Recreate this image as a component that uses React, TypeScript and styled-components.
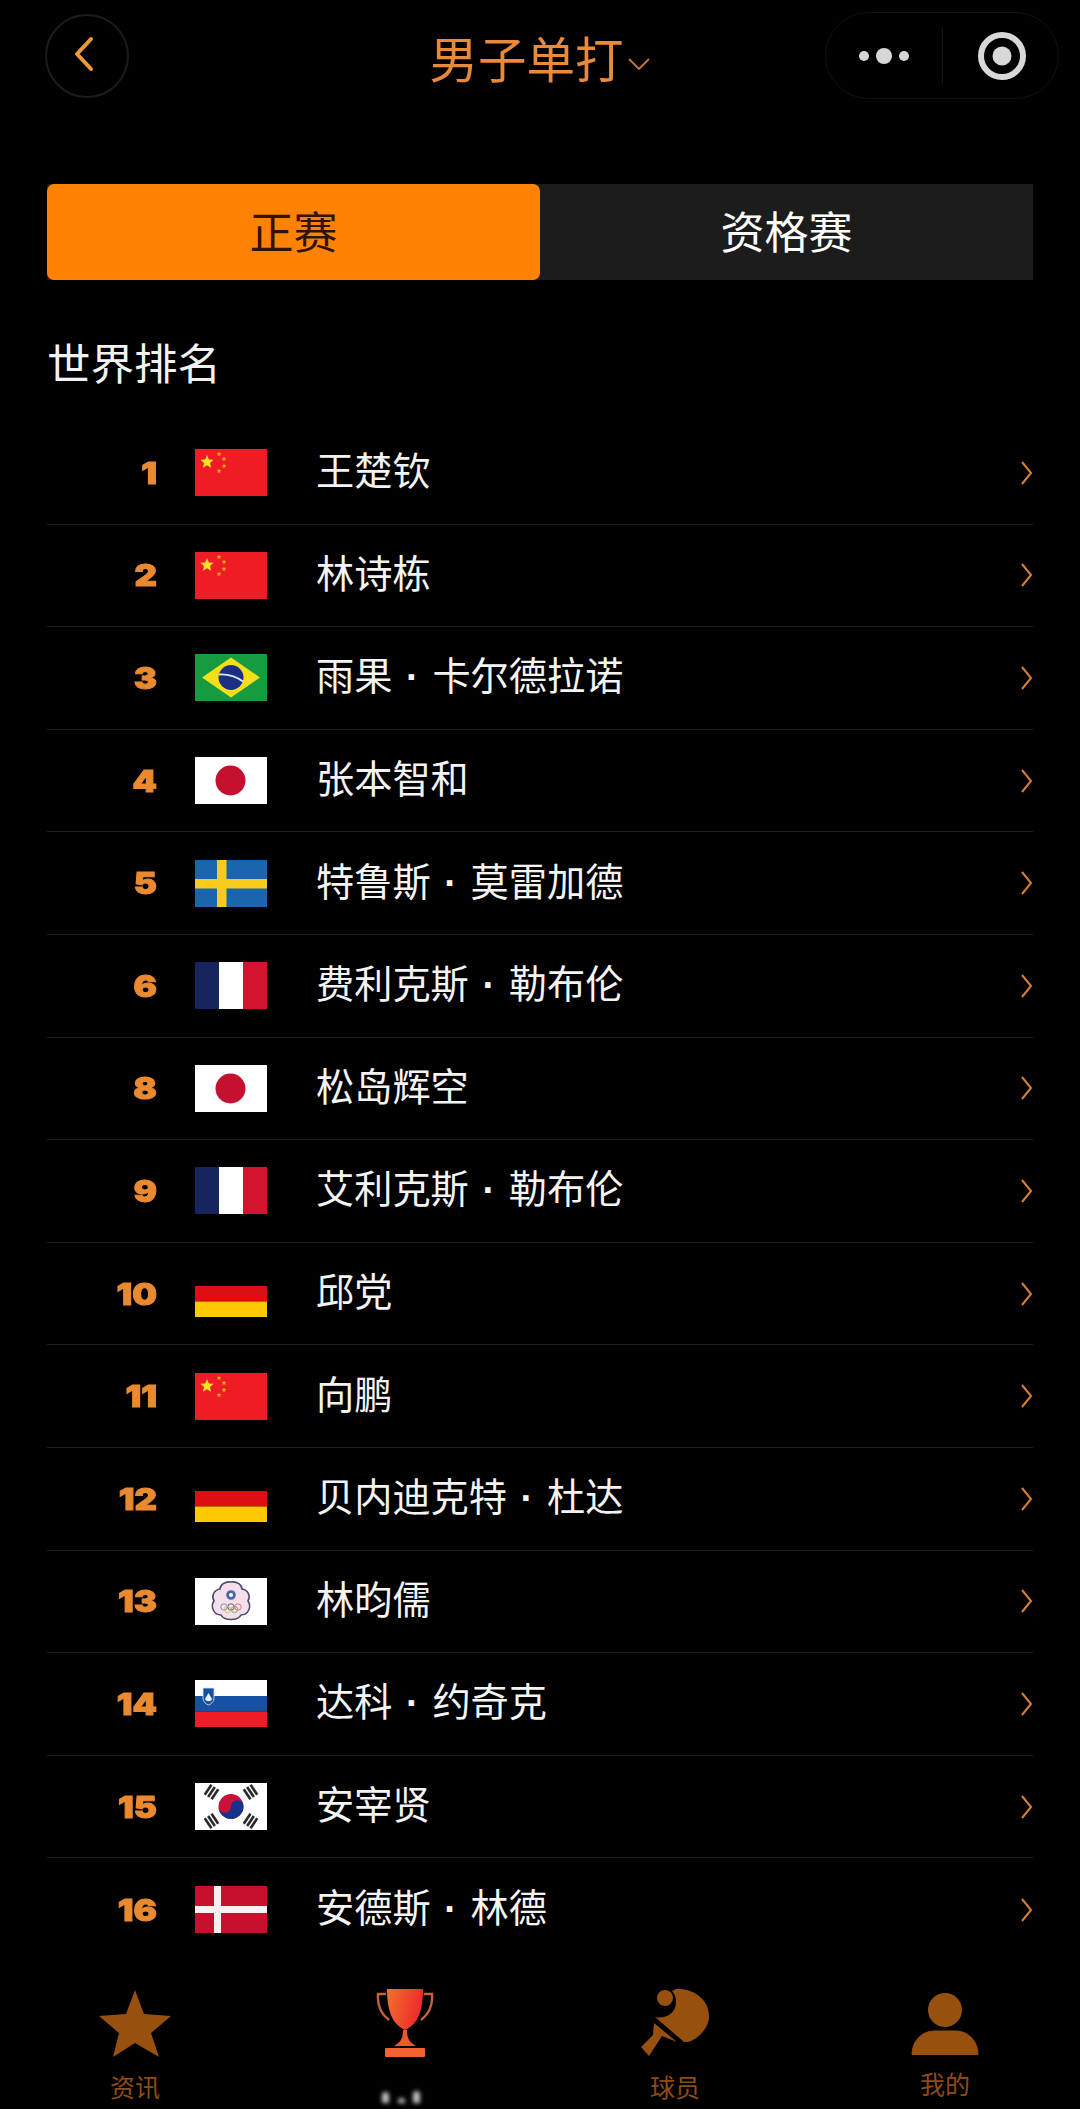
import React from 'react';
import styled, { createGlobalStyle } from 'styled-components';

const GlobalStyle = createGlobalStyle`
  html, body { margin: 0; padding: 0; background: #000; }
  * { box-sizing: border-box; }
  #root { font-family: "Noto Sans CJK SC", "Noto Sans", sans-serif; }
`;

const Page = styled.div`
  width: 1080px;
  height: 2109px;
  background: #000;
  display: flex;
  flex-direction: column;
  overflow: hidden;
`;

const Header = styled.header`
  height: 99px;
  margin-top: 6px;
  padding: 0 21px;
  display: grid;
  grid-template-columns: 1fr auto 1fr;
  align-items: center;
`;

const BackButton = styled.button`
  justify-self: start;
  width: 84px;
  height: 84px;
  margin-left: 24px;
  padding: 0 6px 4px 0;
  border: 2px solid #1c1c1c;
  border-radius: 50%;
  background: transparent;
  display: flex;
  align-items: center;
  justify-content: center;
`;

const TitleWrap = styled.div`
  display: flex;
  align-items: center;
  gap: 3px;
  padding-top: 3px;
  color: #e88a38;
`;

const Title = styled.h1`
  margin: 0;
  font-size: 48.5px;
  line-height: 66px;
  font-weight: 400;
`;

const TitleCaret = styled.svg`
  width: 24px;
  height: 14px;
  margin-top: 14px;
`;

const Capsule = styled.div`
  justify-self: end;
  width: 234px;
  height: 87px;
  border: 1.5px solid #121212;
  border-radius: 44px;
  display: flex;
  align-items: center;
`;

const CapsuleSide = styled.div<{ $nudge?: number }>`
  flex: none;
  width: 50%;
  height: 55px;
  padding-left: ${p => p.$nudge ?? 0}px;
  display: flex;
  align-items: center;
  justify-content: center;
  & + & { border-left: 1.5px solid #181818; }
`;

const Tabs = styled.nav`
  margin: 79px 47px 0;
  height: 96px;
  display: grid;
  grid-template-columns: 1fr 1fr;
  background: #1c1c1c;
`;

const Tab = styled.div<{ $active?: boolean }>`
  display: flex;
  align-items: center;
  justify-content: center;
  font-size: 44px;
  padding-bottom: 4px;
  border-radius: 7px;
  background: ${p => (p.$active ? '#ff8205' : 'transparent')};
  color: ${p => (p.$active ? '#331300' : '#fff')};
`;

const SectionTitle = styled.h2`
  margin: 50px 47px 0;
  height: 92px;
  font-size: 43.5px;
  line-height: 64px;
  font-weight: 400;
  color: #f2f2f2;
`;

const List = styled.ul`
  list-style: none;
  margin: 0 47px;
  padding: 0;
`;

const Row = styled.li`
  height: 102.6px;
  display: flex;
  align-items: center;
  border-bottom: 1px solid #1d1d1d;
  &:last-child { border-bottom: none; }
`;

const Rank = styled.span`
  width: 110px;
  text-align: right;
  font-family: Inter, "DejaVu Sans", sans-serif;
  font-weight: 900;
  font-size: 30px;
  color: #ea8a30;
  -webkit-text-stroke: 1px #ea8a30;
  transform: scaleX(1.16);
  transform-origin: right center;
`;

const FlagBox = styled.svg`
  width: 72px;
  height: 47px;
  margin-left: 38px;
  flex: none;
`;

const Name = styled.span`
  flex: 1;
  margin-left: 49px;
  margin-top: -8px;
  font-size: 38.2px;
  color: #f4f4f4;
  white-space: pre;
`;

const NameDot = styled.span`
  display: inline-block;
  width: 40px;
  text-align: center;
  font-family: "Liberation Sans", sans-serif;
  font-weight: 700;
`;

const Arrow = styled.svg`
  width: 13px;
  height: 26px;
  flex: none;
`;

const TabBar = styled.footer`
  margin-top: auto;
  height: 122px;
  display: grid;
  grid-template-columns: repeat(4, 1fr);
`;

const TabItem = styled.div`
  display: flex;
  flex-direction: column;
  align-items: center;
`;

const TabIconSlot = styled.div`
  height: 72px;
  display: flex;
  align-items: center;
  justify-content: center;
`;

const TabLabel = styled.span<{ $shift?: number }>`
  margin-top: ${p => 11 + (p.$shift ?? 0)}px;
  font-size: 25px;
  line-height: 32px;
  color: #8c4c14;
`;

const Smudges = styled.div`
  margin: 32px 8px 0 0;
  width: 38px;
  height: 12px;
  display: flex;
  justify-content: space-between;
  align-items: flex-end;
  filter: blur(2px);
`;

const Smudge = styled.i<{ $h: number }>`
  width: 7px;
  height: ${p => p.$h}px;
  background: #c4c4c4;
  border-radius: 4px 4px 0 0;
`;

type FlagCode = 'cn' | 'br' | 'jp' | 'se' | 'fr' | 'de' | 'tpe' | 'si' | 'kr' | 'dk';

const CnStar = ({ x, y, r, fill = '#fbe02a' }: { x: number; y: number; r: number; fill?: string }) => {
  const pts = Array.from({ length: 10 }, (_, i) => {
    const a = -Math.PI / 2 + (i * Math.PI) / 5;
    const d = i % 2 ? r * 0.45 : r;
    return `${x + d * Math.cos(a)},${y + d * Math.sin(a)}`;
  }).join(' ');
  return <polygon points={pts} fill={fill} />;
};

const Trigram = ({ x, y, rot }: { x: number; y: number; rot: number }) => (
  <g transform={`translate(${x} ${y}) rotate(${rot})`} fill="#2a2a2a">
    <rect x="-6" y="-5.4" width="12" height="2.6" />
    <rect x="-6" y="-1.3" width="12" height="2.6" />
    <rect x="-6" y="2.8" width="12" height="2.6" />
  </g>
);

const Flag = ({ code }: { code: FlagCode }) => (
  <FlagBox viewBox="0 0 72 47">
    {code === 'cn' && (
      <>
        <rect width="72" height="47" fill="#ee1c25" />
        <CnStar x={12} y={13} r={7} />
        <CnStar x={24} y={5} r={2.6} fill="#f5a51e" />
        <CnStar x={29} y={10} r={2.6} fill="#f5a51e" />
        <CnStar x={29} y={17} r={2.6} fill="#f5a51e" />
        <CnStar x={24} y={22} r={2.6} fill="#f5a51e" />
      </>
    )}
    {code === 'br' && (
      <>
        <rect width="72" height="47" fill="#169b3e" />
        <polygon points="36,3.5 65,23.5 36,43.5 7,23.5" fill="#f5df18" />
        <circle cx="36" cy="23.5" r="12.5" fill="#1b2f86" />
        <path d="M24 20.5 C32 20 41 22.5 48 27.5" stroke="#dfe6f0" strokeWidth="1.8" fill="none" />
      </>
    )}
    {code === 'jp' && (
      <>
        <rect width="72" height="47" fill="#fff" />
        <circle cx="35.5" cy="23.5" r="15" fill="#c5102f" />
      </>
    )}
    {code === 'se' && (
      <>
        <rect width="72" height="47" fill="#1a66ac" />
        <rect x="22" width="9.5" height="47" fill="#f8cb1c" />
        <rect y="19" width="72" height="9.5" fill="#f8cb1c" />
      </>
    )}
    {code === 'fr' && (
      <>
        <rect width="24" height="47" fill="#14245c" />
        <rect x="24" width="24" height="47" fill="#fff" />
        <rect x="48" width="24" height="47" fill="#d3142e" />
      </>
    )}
    {code === 'de' && (
      <>
        <rect width="72" height="16" fill="#000" />
        <rect y="16" width="72" height="15.5" fill="#dd0f14" />
        <rect y="31.5" width="72" height="15.5" fill="#fdc905" />
      </>
    )}
    {code === 'tpe' && (
      <>
        <rect width="72" height="47" fill="#fff" />
        <path
          d="M36 4 C42 3 47 7 47 11 C53 12 56 18 53 23 C57 29 53 37 46 37 C43 43 29 43 26 37 C19 37 15 29 19 23 C16 18 19 12 25 11 C25 7 30 3 36 4 Z"
          fill="#f4dfea"
          stroke="#4c4a70"
          strokeWidth="1.6"
        />
        <circle cx="36" cy="17" r="4.8" fill="#4b68ac" />
        <circle cx="36" cy="17" r="2" fill="#fff" />
        <g fill="none" strokeWidth="0.9">
          <circle cx="29" cy="29" r="3.2" stroke="#6d8fc0" />
          <circle cx="36" cy="29" r="3.2" stroke="#555" />
          <circle cx="43" cy="29" r="3.2" stroke="#cf6a70" />
          <circle cx="32.5" cy="31.5" r="3.2" stroke="#d8bf60" />
          <circle cx="39.5" cy="31.5" r="3.2" stroke="#78a878" />
        </g>
      </>
    )}
    {code === 'si' && (
      <>
        <rect width="72" height="16" fill="#fff" />
        <rect y="16" width="72" height="15.5" fill="#1552a4" />
        <rect y="31.5" width="72" height="15.5" fill="#ee1c25" />
        <path d="M8 8 H19 V18 C19 22 16 24 13.5 25 C11 24 8 22 8 18 Z" fill="#1552a4" stroke="#dfe6ee" strokeWidth="0.8" />
        <path d="M10 19 L13.5 13 L17 19 C16 22 11 22 10 19 Z" fill="#eef2f6" />
      </>
    )}
    {code === 'kr' && (
      <>
        <rect width="72" height="47" fill="#fff" />
        <circle cx="36" cy="23.5" r="12.5" fill="#c9123a" />
        <path
          d="M23.5 23.5 A6.25 6.25 0 0 0 36 23.5 A6.25 6.25 0 0 1 48.5 23.5 A12.5 12.5 0 0 1 23.5 23.5 Z"
          fill="#17348c"
        />
        <Trigram x={16.5} y={9} rot={-56} />
        <Trigram x={55.5} y={9} rot={56} />
        <Trigram x={16.5} y={38} rot={56} />
        <Trigram x={55.5} y={38} rot={-56} />
      </>
    )}
    {code === 'dk' && (
      <>
        <rect width="72" height="47" fill="#c8102e" />
        <rect x="19" width="7" height="47" fill="#fbeef0" />
        <rect y="20" width="72" height="7" fill="#fbeef0" />
      </>
    )}
  </FlagBox>
);

const players: { rank: number; flag: FlagCode; name: string }[] = [
  { rank: 1, flag: 'cn', name: '王楚钦' },
  { rank: 2, flag: 'cn', name: '林诗栋' },
  { rank: 3, flag: 'br', name: '雨果·卡尔德拉诺' },
  { rank: 4, flag: 'jp', name: '张本智和' },
  { rank: 5, flag: 'se', name: '特鲁斯·莫雷加德' },
  { rank: 6, flag: 'fr', name: '费利克斯·勒布伦' },
  { rank: 8, flag: 'jp', name: '松岛辉空' },
  { rank: 9, flag: 'fr', name: '艾利克斯·勒布伦' },
  { rank: 10, flag: 'de', name: '邱党' },
  { rank: 11, flag: 'cn', name: '向鹏' },
  { rank: 12, flag: 'de', name: '贝内迪克特·杜达' },
  { rank: 13, flag: 'tpe', name: '林昀儒' },
  { rank: 14, flag: 'si', name: '达科·约奇克' },
  { rank: 15, flag: 'kr', name: '安宰贤' },
  { rank: 16, flag: 'dk', name: '安德斯·林德' },
];

const BROWN = '#98500f';

const PlayerName = ({ value }: { value: string }) => {
  const [given, family] = value.split('·');
  return (
    <Name>
      {given}
      {family && <NameDot>·</NameDot>}
      {family}
    </Name>
  );
};

export default function App() {
  return (
    <Page>
      <GlobalStyle />
      <Header>
        <BackButton aria-label="back">
          <svg width="22" height="36" viewBox="0 0 22 36">
            <path d="M18 3 L4 18 L18 33" fill="none" stroke="#ef9a3a" strokeWidth="4" strokeLinecap="round" strokeLinejoin="round" />
          </svg>
        </BackButton>
        <TitleWrap>
          <Title>男子单打</Title>
          <TitleCaret viewBox="0 0 24 14">
            <path d="M2 2 L12 12 L22 2" fill="none" stroke="#c8763a" strokeWidth="1.8" />
          </TitleCaret>
        </TitleWrap>
        <Capsule>
          <CapsuleSide>
            <svg width="52" height="20" viewBox="0 0 52 20">
              <circle cx="6" cy="10" r="5" fill="#d8d8d8" />
              <circle cx="26" cy="10" r="8" fill="#d8d8d8" />
              <circle cx="46" cy="10" r="5" fill="#d8d8d8" />
            </svg>
          </CapsuleSide>
          <CapsuleSide $nudge={3}>
            <svg width="50" height="50" viewBox="0 0 50 50">
              <circle cx="25" cy="25" r="21" fill="none" stroke="#d8d8d8" strokeWidth="6" />
              <circle cx="25" cy="25" r="9.5" fill="#d8d8d8" />
            </svg>
          </CapsuleSide>
        </Capsule>
      </Header>

      <Tabs>
        <Tab $active>正赛</Tab>
        <Tab>资格赛</Tab>
      </Tabs>

      <SectionTitle>世界排名</SectionTitle>

      <List>
        {players.map(p => (
          <Row key={p.rank}>
            <Rank>{p.rank}</Rank>
            <Flag code={p.flag} />
            <PlayerName value={p.name} />
            <Arrow viewBox="0 0 13 26">
              <path d="M2 2 L11 13 L2 24" fill="none" stroke="#d87f35" strokeWidth="2" />
            </Arrow>
          </Row>
        ))}
      </List>

      <TabBar>
        <TabItem>
          <TabIconSlot>
            <svg width="72" height="67" viewBox="0 0 72 67">
              <polygon points="36,0 45,24 72,26 52,43 60,67 36,53 14,67 20,43 0,26 27,24" fill={BROWN} />
            </svg>
          </TabIconSlot>
          <TabLabel>资讯</TabLabel>
        </TabItem>
        <TabItem>
          <TabIconSlot>
            <svg width="58" height="70" viewBox="0 0 58 70">
              <defs>
                <linearGradient id="cup" x1="0" y1="0" x2="1" y2="0.25">
                  <stop offset="0" stopColor="#f2702e" />
                  <stop offset="1" stopColor="#ee2a2c" />
                </linearGradient>
              </defs>
              <path d="M11 1 H47 C47 20 43 36 29 42 C15 36 11 20 11 1 Z" fill="url(#cup)" />
              <path d="M10 6 H2 C1 18 5 26 13 32 M48 6 H56 C57 18 53 26 45 32" fill="none" stroke="#c8623a" strokeWidth="2.4" />
              <path d="M27 42 H31 C31 50 33 54 40 58 H18 C25 54 27 50 27 42 Z" fill="#f0582c" />
              <rect x="9" y="60" width="40" height="9" rx="1" fill="#f0622e" />
            </svg>
          </TabIconSlot>
          <Smudges>
            <Smudge $h={11} />
            <Smudge $h={5} />
            <Smudge $h={12} />
          </Smudges>
        </TabItem>
        <TabItem>
          <TabIconSlot>
            <svg width="70" height="68" viewBox="0 0 70 68">
              <circle cx="25" cy="9" r="8" fill={BROWN} />
              <path d="M36 0 C54 -1 70 11 69 29 C68 40 58 50 48 53 L44 53 L15 28 C24 30 32 26 35 19 C37 12 36 6 32 2 Z" fill={BROWN} />
              <path d="M14 34 L37 53 L22 47 L9 67 L1 58 L13 46 Z" fill={BROWN} strokeLinejoin="round" />
            </svg>
          </TabIconSlot>
          <TabLabel>球员</TabLabel>
        </TabItem>
        <TabItem>
          <TabIconSlot>
            <svg width="70" height="68" viewBox="0 0 70 68">
              <circle cx="35" cy="21" r="17" fill={BROWN} />
              <path d="M2 65.5 C2 52 12 42 24 42 H46 C58 42 68 52 68 65.5 Z" fill={BROWN} stroke={BROWN} strokeWidth="1" strokeLinejoin="round" />
            </svg>
          </TabIconSlot>
          <TabLabel $shift={-3}>我的</TabLabel>
        </TabItem>
      </TabBar>
    </Page>
  );
}
